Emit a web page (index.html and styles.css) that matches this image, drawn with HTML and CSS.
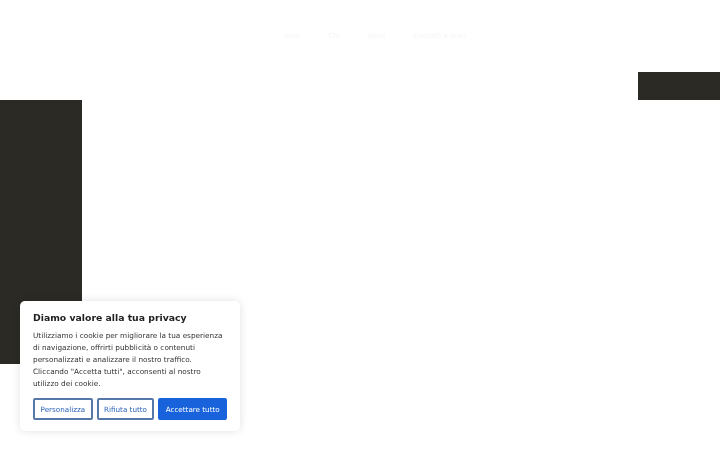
FILE: index.html
```html
<!DOCTYPE html>
<html lang="it">
<head>
    <meta charset="UTF-8">
    <meta name="viewport" content="width=device-width, initial-scale=1.0">
    <title>Home</title>
    <link rel="stylesheet" href="styles.css">
</head>
<body>
    <!-- Intestazione -->
    <header class="site-header">
        <nav class="main-nav">
            <a href="#">Hom</a>
            <a href="#">Chi</a>
            <a href="#">Servi</a>
            <a href="#">Contatti e orari</a>
        </nav>
    </header>

    <!-- Fascia scura a destra -->
    <div class="top-strip">
        <div class="dark-block dark-block--right"></div>
    </div>

    <!-- Sezione principale -->
    <section class="hero">
        <div class="dark-block dark-block--left"></div>
    </section>

    <!-- Banner cookie -->
    <div class="cookie-banner">
        <h3 class="cookie-title">Diamo valore alla tua privacy</h3>
        <p class="cookie-text">Utilizziamo i cookie per migliorare la tua esperienza di navigazione, offrirti pubblicità o contenuti personalizzati e analizzare il nostro traffico. Cliccando "Accetta tutti", acconsenti al nostro utilizzo dei cookie.</p>
        <div class="cookie-actions">
            <button class="cookie-btn cookie-btn--outline cookie-btn--custom">Personalizza</button>
            <button class="cookie-btn cookie-btn--outline cookie-btn--reject">Rifiuta tutto</button>
            <button class="cookie-btn cookie-btn--primary">Accettare tutto</button>
        </div>
    </div>
</body>
</html>
```

FILE: styles.css
```css
* {
    margin: 0;
    padding: 0;
    box-sizing: border-box;
}

body {
    font-family: 'DejaVu Sans', 'Liberation Sans', sans-serif;
    background-color: #ffffff;
    color: #212121;
    min-height: 100vh;
}

/* Intestazione */
.site-header {
    height: 72px;
    display: flex;
    justify-content: center;
    padding-top: 32px;
}

.main-nav {
    display: flex;
    gap: 28px;
    padding-left: 30px;
}

.main-nav a {
    color: #f6f6f6;
    text-decoration: none;
    font-size: 7px;
}

/* Blocchi scuri */
.dark-block {
    background-color: #2b2a25;
    width: 82px;
}

.top-strip {
    display: flex;
    justify-content: flex-end;
}

.dark-block--right {
    height: 28px;
}

.hero {
    display: flex;
}

.dark-block--left {
    height: 264px;
}

/* Banner cookie */
.cookie-banner {
    position: fixed;
    left: 20px;
    top: 301px;
    width: 220px;
    background-color: #ffffff;
    border-radius: 5px;
    box-shadow: 0 0 8px rgba(0, 0, 0, 0.12);
    padding: 11px 13px 11px;
}

.cookie-title {
    font-size: 9.3px;
    font-weight: bold;
    color: #212121;
    margin-bottom: 6px;
    line-height: 12px;
}

.cookie-text {
    font-size: 7.3px;
    line-height: 12px;
    color: #333333;
    margin-bottom: 8px;
}

.cookie-actions {
    display: flex;
    gap: 4px;
}

.cookie-btn {
    font-family: inherit;
    font-size: 7.2px;
    height: 22px;
    border-radius: 2px;
    cursor: pointer;
}

.cookie-btn--outline {
    background-color: #ffffff;
    color: #2a62b8;
    border: 2px solid #5577aa;
}

.cookie-btn--custom {
    width: 60px;
}

.cookie-btn--reject {
    width: 58px;
}

.cookie-btn--primary {
    width: 69px;
    background-color: #1863dc;
    color: #ffffff;
    border: 2px solid #1863dc;
}
```
